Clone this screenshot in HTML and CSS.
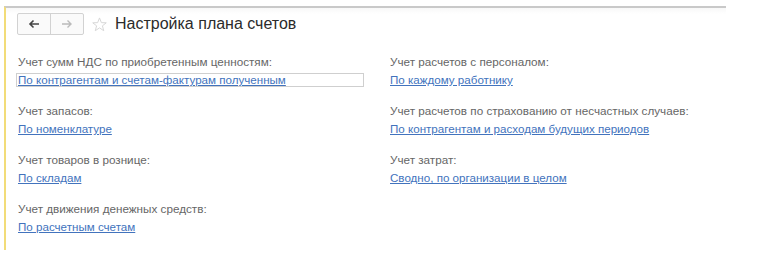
FILE: index.html
```html
<!DOCTYPE html>
<html lang="ru">
<head>
    <meta charset="UTF-8">
    <title>Настройка плана счетов</title>
    <link rel="stylesheet" href="styles.css">
</head>
<body>
    <div class="window">
        <div class="header">
            <div class="nav">
                <span class="nav-btn">
                    <svg width="12" height="10" viewBox="0 0 12 10"><path d="M11 5H2M5.5 1.5L2 5l3.5 3.5" fill="none" stroke="#444" stroke-width="1.6"/></svg>
                </span>
                <span class="nav-btn">
                    <svg width="12" height="10" viewBox="0 0 12 10"><path d="M1 5h9M6.5 1.5L10 5 6.5 8.5" fill="none" stroke="#bbb" stroke-width="1.4"/></svg>
                </span>
            </div>
            <svg class="star" width="15" height="15" viewBox="0 0 16 16"><polygon points="8,1 10,6 15.2,6.2 11.1,9.4 12.5,14.6 8,11.6 3.5,14.6 4.9,9.4 0.8,6.2 6,6" fill="none" stroke="#d4d4d4" stroke-width="1"/></svg>
            <h1>Настройка плана счетов</h1>
        </div>

        <div class="form">
            <div class="column">
                <div class="field">
                    <div class="label">Учет сумм НДС по приобретенным ценностям:</div>
                    <a class="value focused" href="#">По контрагентам и счетам-фактурам полученным</a>
                </div>
                <div class="field">
                    <div class="label">Учет запасов:</div>
                    <a class="value" href="#">По номенклатуре</a>
                </div>
                <div class="field">
                    <div class="label">Учет товаров в рознице:</div>
                    <a class="value" href="#">По складам</a>
                </div>
                <div class="field">
                    <div class="label">Учет движения денежных средств:</div>
                    <a class="value" href="#">По расчетным счетам</a>
                </div>
            </div>
            <div class="column">
                <div class="field">
                    <div class="label">Учет расчетов с персоналом:</div>
                    <a class="value" href="#">По каждому работнику</a>
                </div>
                <div class="field">
                    <div class="label">Учет расчетов по страхованию от несчастных случаев:</div>
                    <a class="value" href="#">По контрагентам и расходам будущих периодов</a>
                </div>
                <div class="field">
                    <div class="label">Учет затрат:</div>
                    <a class="value" href="#">Сводно, по организации в целом</a>
                </div>
            </div>
        </div>
    </div>
</body>
</html>
```

FILE: styles.css
```css
body {
    margin: 0;
    padding: 6px 0 0 4px;
    background: #fff;
    font-family: "Liberation Sans", Arial, sans-serif;
}

.window {
    width: 720px;
    height: 242px;
    border-top: 2px solid #c9c9c9;
    border-left: 2px solid #f2dc78;
    background: linear-gradient(#f8f8f8, #fff 6px);
}

.header {
    display: flex;
    align-items: center;
    padding: 5px 0 0 11px;
    height: 22px;
}

.nav {
    display: flex;
    border: 1px solid #d2d2d2;
    border-radius: 2px;
    background: #fafafa;
}

.nav-btn {
    width: 32px;
    height: 20px;
    display: flex;
    align-items: center;
    justify-content: center;
}

.nav-btn + .nav-btn {
    border-left: 1px solid #d2d2d2;
}

.star {
    margin-left: 8px;
}

h1 {
    margin: 0 0 0 8px;
    font-size: 16px;
    font-weight: normal;
    color: #2b2b2b;
}

.form {
    display: flex;
    padding: 20px 0 0 10px;
}

.column {
    flex: 0 0 372px;
    display: flex;
    flex-direction: column;
    gap: 17px;
}

.column + .column {
    flex: 1 1 auto;
}

.field {
    display: flex;
    flex-direction: column;
    gap: 4px;
}

.label {
    padding-left: 2px;
    font-size: 11.7px;
    line-height: 14px;
    color: #666;
}

.value {
    display: block;
    width: 344px;
    padding: 0 1px;
    border: 1px solid transparent;
    font-size: 11.6px;
    line-height: 12px;
    color: #4273bd;
    text-decoration: underline;
}

.value.focused {
    border-color: #cfcfcf;
}
```
